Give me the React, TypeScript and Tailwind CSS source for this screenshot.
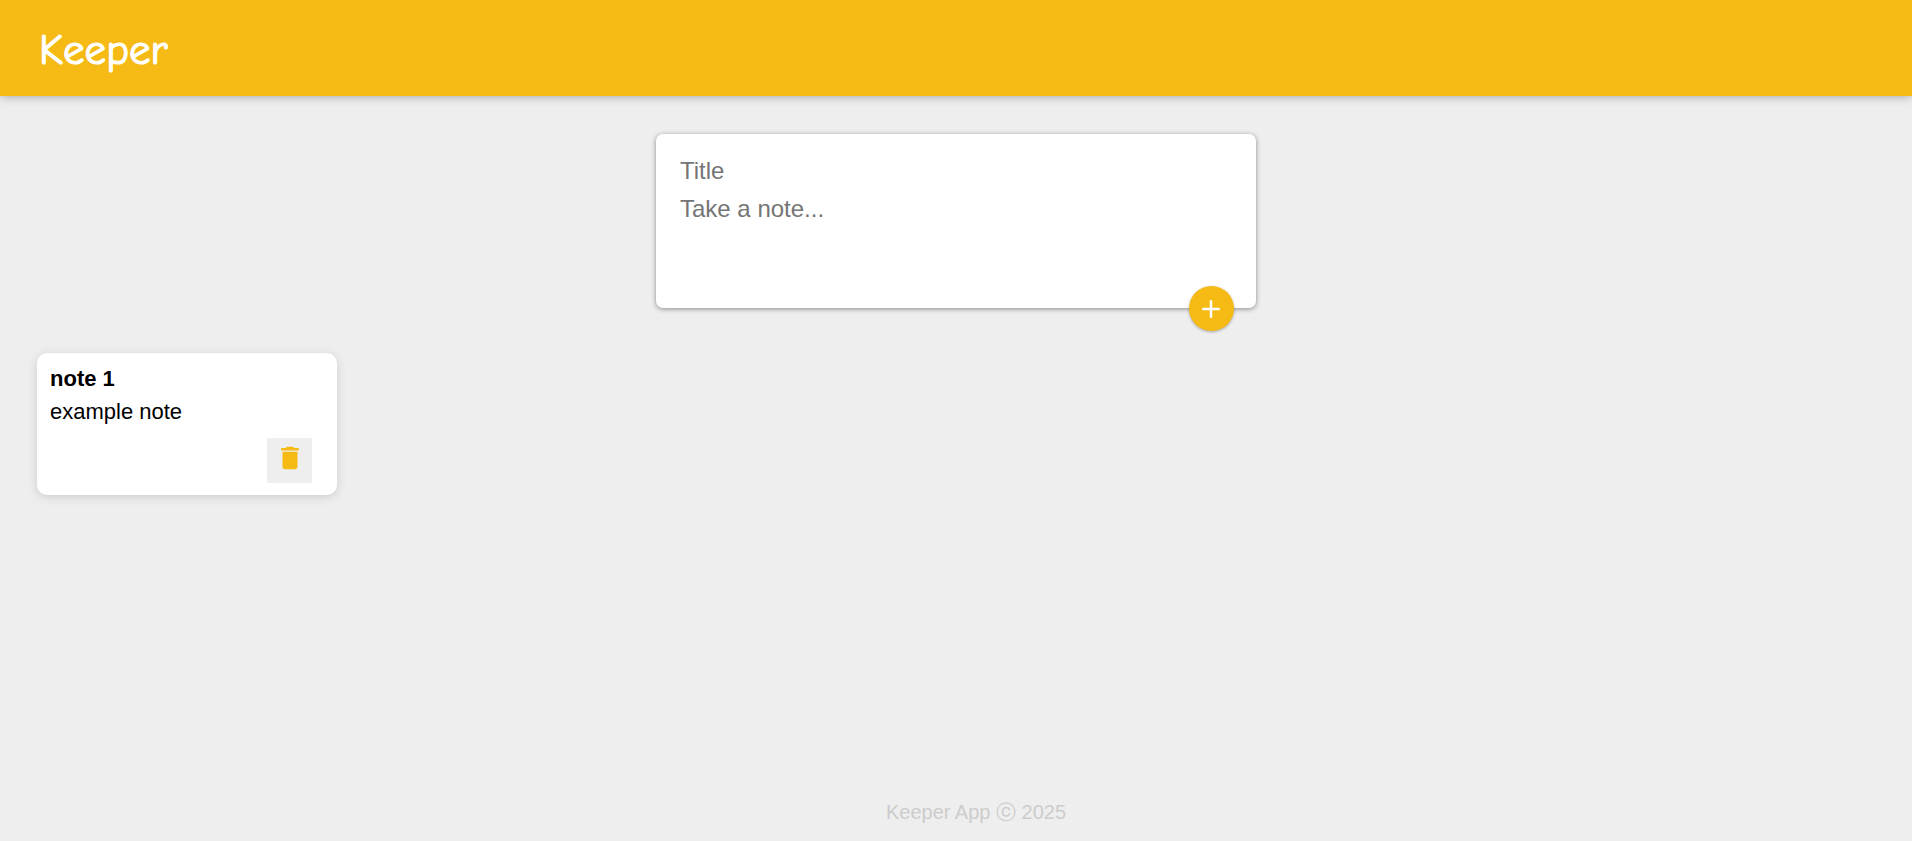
export default function App() {
  return (
    <div className="min-h-[841px] flex flex-col bg-[#eeeeee] font-['Liberation_Sans',Arial,sans-serif]">
      <header className="h-[96px] shrink-0 bg-[#f5ba13] px-[39px] pt-[20px] pb-[16px] shadow-[0_0_10px_0_rgba(0,0,0,0.35)] flex items-center">
        <h1 className="text-white text-[43px] leading-[48px] font-normal font-['Comic_Sans_MS','Comic_Neue',cursive] [-webkit-text-stroke:1.2px_white]">Keeper</h1>
      </header>

      <form className="relative w-[600px] h-[174px] mt-[38px] mx-auto bg-white rounded-[7px] shadow-[0_1px_5px_rgb(138,137,137)] px-[24px] pt-[24px] flex flex-col">
        <input
          placeholder="Title"
          className="w-full h-[26px] text-[24px] leading-[26px] outline-none placeholder:text-[#757575]"
        />
        <textarea
          placeholder="Take a note..."
          className="w-full mt-[12px] h-[90px] text-[24px] leading-[26px] outline-none resize-none placeholder:text-[#757575]"
        />
        <button
          type="button"
          className="absolute right-[22px] bottom-[-23px] w-[45px] h-[45px] rounded-full bg-[#f5ba13] flex items-center justify-center shadow-[0_1px_3px_rgba(0,0,0,0.3)]"
        >
          <svg viewBox="0 0 24 24" className="w-[30px] h-[30px] fill-white -ml-[1px]">
            <path d="M19 13h-6v6h-2v-6H5v-2h6V5h2v6h6v2z" />
          </svg>
        </button>
      </form>

      <div className="mt-[45px] ml-[37px] w-[300px] h-[142px] bg-white rounded-[10px] shadow-[0_2px_10px_#cccccc] pl-[13px] pr-[25px] pt-[12px] flex flex-col text-black">
        <h2 className="text-[22px] leading-[28px] font-bold">note 1</h2>
        <p className="text-[22px] leading-[28px] mt-[5px]">example note</p>
        <button
          type="button"
          className="mt-auto mb-[12px] self-end w-[45px] h-[45px] pb-[5px] bg-[#eeeeee] flex items-center justify-center"
        >
          <svg viewBox="0 0 24 24" className="w-[30px] h-[30px] fill-[#f5ba13]">
            <path d="M6 19c0 1.1.9 2 2 2h8c1.1 0 2-.9 2-2V7H6v12zM19 4h-3.5l-1-1h-5l-1 1H5v2h14V4z" />
          </svg>
        </button>
      </div>

      <footer className="mt-auto h-[46px] pl-[40px] text-center text-[#cccccc] text-[20px] leading-[24px] pt-[5px]">
        Keeper App ⓒ 2025
      </footer>
    </div>
  );
}
